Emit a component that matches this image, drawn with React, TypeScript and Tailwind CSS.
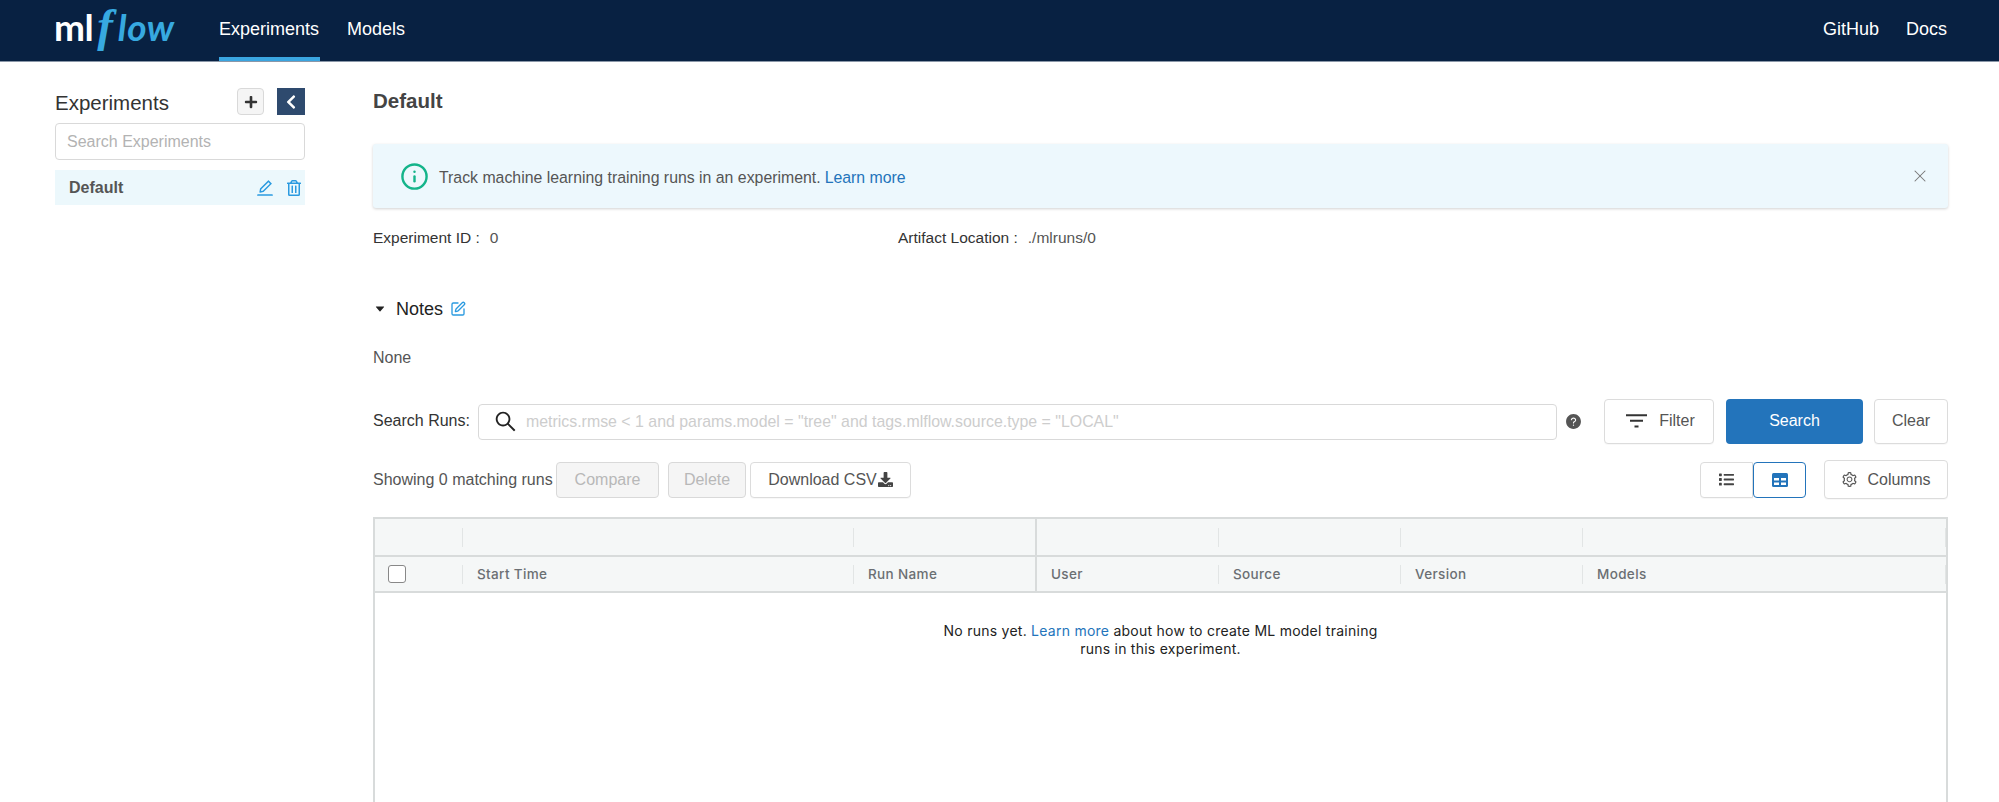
import React from 'react';
import { Info, X } from 'lucide-react';
import {
  AiOutlineEdit,
  AiFillCaretDown,
  AiOutlineSearch,
  AiFillQuestionCircle,
  AiOutlineSetting,
} from 'react-icons/ai';
import { FaPlus, FaChevronLeft, FaDownload, FaList, FaRegTrashAlt } from 'react-icons/fa';
import { LuSquarePen } from 'react-icons/lu';

// --- Table columns ---
const columns = [
  { label: 'Start Time', width: 'w-[391px]' },
  { label: 'Run Name', width: 'w-[183px]' },
  { label: 'User', width: 'w-[182px]' },
  { label: 'Source', width: 'w-[182px]' },
  { label: 'Version', width: 'w-[182px]' },
  { label: 'Models', width: 'w-[363px]' },
];

const Logo = () => (
  <div className="flex items-baseline h-[48px] w-[125px] pt-[2px] leading-none">
    <span className="font-['Lato',sans-serif] text-[37px] font-bold text-white tracking-[-0.5px]">ml</span>
    <span className="font-['Liberation_Serif',serif] text-[47px] italic font-bold text-[#37a9e0] ml-[4px] mr-[5px]">f</span>
    <span className="font-['Lato',sans-serif] text-[37px] italic font-bold text-[#37a9e0] tracking-[0.5px]">low</span>
  </div>
);

const Header = () => (
  <header className="h-[62px] bg-[#082142] border-b border-[#8a97a8] flex items-stretch pl-[54px] pr-[52px] text-white text-[18px] shrink-0">
    <Logo />
    <nav className="flex ml-[40px] gap-[27px]">
      <a className="h-full border-b-[4px] border-[#3aa5e0] flex items-center pt-[1px] w-[101px]">Experiments</a>
      <a className="h-full flex items-center pb-[3px]">Models</a>
    </nav>
    <div className="ml-auto flex items-center gap-[27px] pb-[3px]">
      <a>GitHub</a>
      <a>Docs</a>
    </div>
  </header>
);

const Sidebar = () => (
  <aside className="w-[250px] ml-[55px] shrink-0 pt-[26px]">
    <div className="flex items-center h-[27px]">
      <span className="text-[20.5px] text-[#333] flex-1 pt-[3px]">Experiments</span>
      <button className="w-[27px] h-[27px] rounded-[4px] border border-[#d9d9d9] bg-[#f5f5f5] flex items-center justify-center text-[#333]">
        <FaPlus size={14} />
      </button>
      <button className="w-[28px] h-[27px] ml-[13px] bg-[#2e4a6e] flex items-center justify-center text-white">
        <FaChevronLeft size={16} />
      </button>
    </div>
    <div className="mt-[8px] h-[37px] rounded-[4px] border border-[#d9d9d9] flex items-center px-[11px] text-[16px] text-[#b3b3b3]">
      Search Experiments
    </div>
    <div className="mt-[10px] h-[35px] bg-[#ecf8fc] flex items-center pl-[14px] pr-[3px] text-[16px] font-bold text-[#555]">
      <span className="flex-1">Default</span>
      <AiOutlineEdit size={20} className="text-[#2a9ae0]" />
      <FaRegTrashAlt size={16} className="text-[#2a9ae0] ml-[11px]" />
    </div>
  </aside>
);

const OutlineButton: React.FC<{ className?: string; children: React.ReactNode }> = ({ className, children }) => (
  <button className={`rounded-[4px] border border-[#dcdcdc] bg-white flex items-center justify-center text-[#555] shadow-[0_1px_1px_rgba(0,0,0,0.03)] ${className ?? ''}`}>
    {children}
  </button>
);

const FilterLines = () => (
  <svg width="21" height="14" viewBox="0 0 21 14" className="text-[#333]">
    <path d="M0 1.2h21M4 6.8h13M8.5 12.4h4" stroke="currentColor" strokeWidth="2" fill="none" />
  </svg>
);

const TableGlyph = () => (
  <svg width="16" height="14" viewBox="0 0 16 14">
    <rect width="16" height="14" rx="1.5" fill="#2374bb" />
    <path d="M2 5h5v2.5H2zM9 5h5v2.5H9zM2 9.5h5V12H2zM9 9.5h5V12H9z" fill="#fff" />
  </svg>
);

const SearchBar = () => (
  <div className="flex items-center h-[46px] text-[16px]">
    <span className="text-[#333] w-[105px] shrink-0">Search Runs:</span>
    <div className="w-[1079px] h-[36px] rounded-[4px] border border-[#d9d9d9] flex items-center pl-[14px] shrink-0 mt-[1px]">
      <AiOutlineSearch size={25} className="text-[#222]" />
      <span className="ml-[8px] text-[15.9px] text-[#cdcdcd]">
        metrics.rmse &lt; 1 and params.model = "tree" and tags.mlflow.source.type = "LOCAL"
      </span>
    </div>
    <AiFillQuestionCircle size={17} className="text-[#555] ml-[8px] shrink-0" />
    <OutlineButton className="w-[110px] h-[45px] ml-[22px] gap-[12px] pl-[3px]">
      <FilterLines />
      <span>Filter</span>
    </OutlineButton>
    <button className="w-[137px] h-[45px] ml-[12px] rounded-[4px] bg-[#2374bb] text-white">Search</button>
    <OutlineButton className="w-[74px] h-[45px] ml-[11px]">Clear</OutlineButton>
  </div>
);

const ActionRow = () => (
  <div className="flex items-center mt-[17px] h-[37px] text-[16px]">
    <span className="text-[#555] w-[183px] shrink-0">Showing 0 matching runs</span>
    <button className="w-[103px] h-[36px] rounded-[4px] border border-[#d9d9d9] bg-[#f5f5f5] text-[#b8b8b8]">Compare</button>
    <button className="w-[78px] h-[36px] ml-[9px] rounded-[4px] border border-[#d9d9d9] bg-[#f5f5f5] text-[#b8b8b8]">Delete</button>
    <OutlineButton className="w-[161px] h-[36px] ml-[4px]">
      <span>Download CSV</span>
      <FaDownload size={15} className="text-[#444] ml-[1px]" />
    </OutlineButton>
    <OutlineButton className="w-[53px] h-[36px] ml-auto rounded-r-none">
      <FaList size={15} className="text-[#444]" />
    </OutlineButton>
    <button className="w-[53px] h-[36px] rounded-[4px] border border-[#2374bb] bg-white flex items-center justify-center">
      <TableGlyph />
    </button>
    <OutlineButton className="w-[124px] h-[39px] ml-[18px] gap-[9px]">
      <AiOutlineSetting size={17} />
      <span>Columns</span>
    </OutlineButton>
  </div>
);

const RunsTable = () => (
  <div className="mt-[19px] flex-1 border-x-2 border-t-2 border-[#d8dbdb] min-h-0">
    <div className="flex bg-[#f5f7f7] border-b-2 border-[#d8dbdb] h-[38px]">
      <div className="w-[88px] shrink-0 flex items-center justify-end">
        <span className="h-[19px] border-r border-[#e2e5e5]" />
      </div>
      {columns.map((c, i) => (
        <div key={i} className={`${c.width} shrink-0 flex items-center justify-end ${i === 1 ? 'border-r-2 border-[#d8dbdb]' : ''}`}>
          {i !== 1 && <span className="h-[19px] border-r border-[#e2e5e5]" />}
        </div>
      ))}
    </div>
    <div className="flex bg-[#f5f7f7] border-b-2 border-[#d8dbdb] h-[36px] text-[13.5px] font-medium tracking-[0.35px] text-[#6b6f73] font-['Inter',sans-serif]">
      <div className="w-[88px] shrink-0 flex items-center justify-between pl-[13px]">
        <span className="w-[18px] h-[18px] rounded-[3px] border border-[#888] bg-white" />
        <span className="h-[19px] border-r border-[#e2e5e5]" />
      </div>
      {columns.map((c, i) => (
        <div key={i} className={`${c.width} shrink-0 flex items-center justify-between pl-[14px] ${i === 1 ? 'border-r-2 border-[#d8dbdb]' : ''}`}>
          <span>{c.label}</span>
          {i !== 1 && <span className="h-[19px] border-r border-[#e2e5e5]" />}
        </div>
      ))}
    </div>
    <div className="w-[440px] mx-auto mt-[29px] text-center text-[14px] leading-[18px] tracking-[0.25px] text-[#222] font-['Inter',sans-serif]">
      No runs yet. <a className="text-[#2374bb]">Learn more</a> about how to create ML model training runs in this experiment.
    </div>
  </div>
);

export default function App() {
  return (
    <div className="h-[802px] overflow-hidden flex flex-col bg-white font-['Liberation_Sans',sans-serif]">
      <Header />
      <div className="flex flex-1 min-h-0">
        <Sidebar />
        <main className="ml-[68px] w-[1575px] shrink-0 flex flex-col min-h-0">
          <h1 className="text-[20.5px] font-bold text-[#444] mt-[27px] leading-[24px]">Default</h1>
          <div className="mt-[31px] h-[64px] rounded-[3px] bg-[#edf8fd] shadow-[0_1px_3px_rgba(0,0,0,0.18)] flex items-center pl-[27px] pr-[18px] text-[15.85px] text-[#555] shrink-0">
            <Info size={29} strokeWidth={2} className="text-[#14b48a]" />
            <span className="ml-[10px] pt-[3px]">Track machine learning training runs in an experiment.</span>
            <a className="ml-[4px] pt-[3px] text-[#2374bb]">Learn more</a>
            <X size={20} strokeWidth={1.25} className="ml-auto text-[#777]" />
          </div>
          <div className="flex mt-[21px] h-[18px] items-center text-[15.5px] text-[#333]">
            <span className="w-[525px] flex">
              <span>Experiment ID :</span>
              <span className="ml-[10px] text-[#555]">0</span>
            </span>
            <span>Artifact Location :</span>
            <span className="ml-[10px] text-[#555]">./mlruns/0</span>
          </div>
          <div className="flex items-center mt-[50px] h-[24px] text-[18px] text-[#222]">
            <AiFillCaretDown size={12} className="ml-[1px]" />
            <span className="ml-[10px]">Notes</span>
            <LuSquarePen size={16} className="ml-[7px] text-[#2a9ae0]" />
          </div>
          <div className="mt-[27px] text-[16px] leading-[20px] text-[#555]">None</div>
          <div className="mt-[30px]"><SearchBar /></div>
          <ActionRow />
          <RunsTable />
        </main>
      </div>
    </div>
  );
}
